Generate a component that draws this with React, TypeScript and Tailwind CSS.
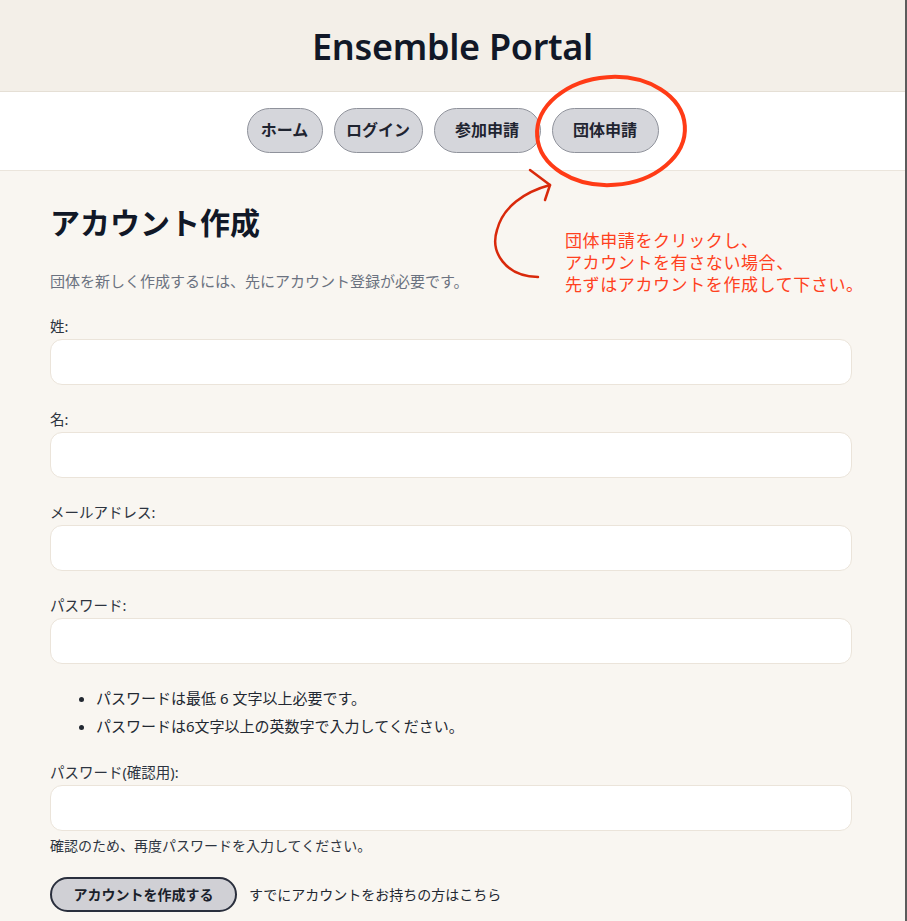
import React from 'react';

const navItems = [
  { label: 'ホーム', width: 'w-[76px]' },
  { label: 'ログイン', width: 'w-[89px]' },
  { label: '参加申請', width: 'w-[107px]' },
  { label: '団体申請', width: 'w-[107px]' },
];

const fields = [
  { label: '姓:', type: 'text' },
  { label: '名:', type: 'text' },
  { label: 'メールアドレス:', type: 'email' },
  { label: 'パスワード:', type: 'password' },
];

function Field({ label, type }: { label: string; type: string }) {
  return (
    <div className="flex flex-col">
      <label className="text-[14.5px] leading-[25px] text-[#2d3440]">{label}</label>
      <input
        type={type}
        className="h-[46px] w-full rounded-xl border border-[#ebe4da] bg-white px-3 outline-none"
      />
    </div>
  );
}

export default function App() {
  return (
    <div
      className="relative min-h-screen border-r-2 border-[#5c5c5c] bg-[#f9f6f1]"
      style={{ fontFamily: '"Noto Sans", "Noto Sans CJK JP", sans-serif' }}
    >
      {/* Header */}
      <header className="flex h-[92px] items-center justify-center border-b border-[#e5dfd5] bg-[#f3efe8] pt-[3px]">
        <h1 className="text-[36px] font-semibold tracking-[-0.3px] text-[#111827]">Ensemble Portal</h1>
      </header>

      {/* Nav */}
      <nav className="flex h-[79px] items-center justify-center gap-[11px] border-b border-[#ebe5dc] bg-white pb-[2px]">
        {navItems.map((item) => (
          <button
            key={item.label}
            className={`${item.width} h-[45px] rounded-full border border-[#8f929b] bg-[#d5d6db] text-[16px] font-bold text-[#1f2430]`}
          >
            {item.label}
          </button>
        ))}
      </nav>

      {/* Main */}
      <main className="px-[50px] pt-[34px]">
        <h2 className="text-[30px] font-bold leading-[36px] text-[#111827]">アカウント作成</h2>
        <p className="mt-[28px] text-[15px] leading-6 text-[#6b7280]">
          団体を新しく作成するには、先にアカウント登録が必要です。
        </p>

        <div className="mt-[21px] flex w-[802px] flex-col gap-[22px]">
          {fields.map((f) => (
            <Field key={f.label} label={f.label} type={f.type} />
          ))}
        </div>

        <ul className="mt-[20px] list-disc pl-[46px] text-[15px] leading-[28px] text-[#222831]">
          <li>パスワードは最低 6 文字以上必要です。</li>
          <li>パスワードは6文字以上の英数字で入力してください。</li>
        </ul>

        <div className="mt-[20px] w-[802px]">
          <Field label="パスワード(確認用):" type="password" />
          <p className="mt-[3px] text-[14px] leading-6 text-[#2d3440]">
            確認のため、再度パスワードを入力してください。
          </p>
        </div>

        <div className="mt-[19px] flex items-center gap-3 pb-[9px]">
          <button className="h-[35px] w-[187px] rounded-full border-2 border-[#2a2f3d] bg-[#d0d0d5] text-[14px] font-bold text-[#1a1f2b]">
            アカウントを作成する
          </button>
          <span className="text-[14px] text-[#222831]">すでにアカウントをお持ちの方はこちら</span>
        </div>
      </main>

      {/* Annotation overlay */}
      <svg
        className="pointer-events-none absolute left-0 top-0"
        width="907"
        height="921"
        viewBox="0 0 907 921"
        fill="none"
      >
        <ellipse cx="611" cy="131" rx="74" ry="54" stroke="#ff3b16" strokeWidth="4" transform="rotate(-4 611 131)" />
        <path
          d="M538 277 C505 276 490 252 497 230 C503 207 524 192 550 185"
          stroke="#d9290b"
          strokeWidth="2.5"
          strokeLinecap="round"
        />
        <path d="M530 170 L550 185 L545 200" stroke="#d9290b" strokeWidth="2.5" strokeLinecap="round" strokeLinejoin="round" />
      </svg>
      <div className="pointer-events-none absolute left-[565px] top-[230px] text-[17px] leading-[22px] tracking-[0.6px] text-[#ff4020]">
        団体申請をクリックし、
        <br />
        アカウントを有さない場合、
        <br />
        先ずはアカウントを作成して下さい。
      </div>
    </div>
  );
}
